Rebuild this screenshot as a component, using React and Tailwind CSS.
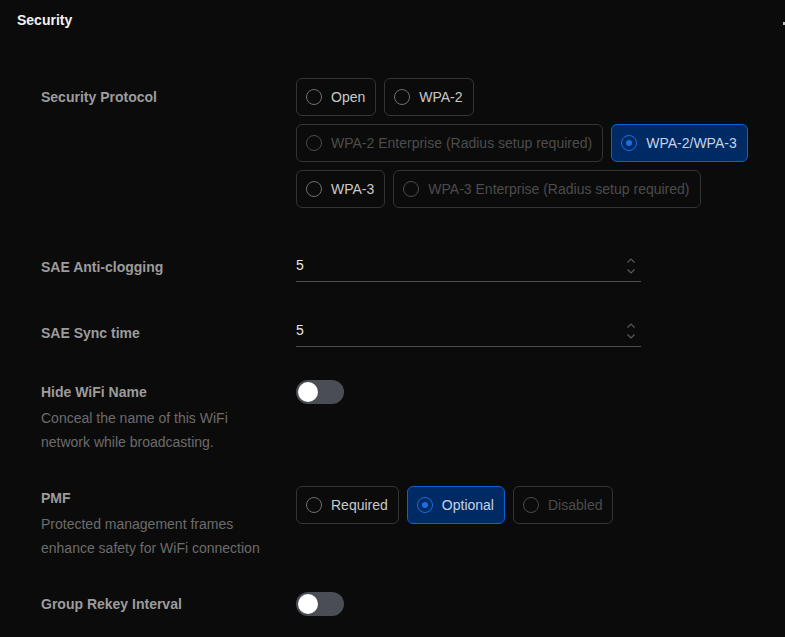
import { useState } from 'react'

const font = { fontFamily: '"Liberation Sans", Arial, sans-serif' }

function Radio({ label, checked, disabled, onClick }) {
  let box = 'border-[#333436] bg-transparent'
  let text = 'text-[#c9c9c9]'
  let ring = 'border-[#6f6f6f]'
  if (checked) {
    box = 'border-[#0b62d6] bg-[#002a63]'
    text = 'text-[#c6d3e6]'
    ring = 'border-[#1a6fe0]'
  } else if (disabled) {
    text = 'text-[#4c4c4c]'
    ring = 'border-[#4a4a4a]'
  }
  return (
    <button
      type="button"
      onClick={disabled ? undefined : onClick}
      className={`flex h-[38px] items-center gap-[9px] rounded-[6px] border pl-[9px] pr-[10px] text-[14px] ${box} ${text}`}
    >
      <span className={`flex h-4 w-4 items-center justify-center rounded-full border ${ring}`}>
        {checked && <span className="h-[6px] w-[6px] rounded-full bg-[#1a6fe0]" />}
      </span>
      {label}
    </button>
  )
}

function Toggle({ on, onClick }) {
  return (
    <button
      type="button"
      onClick={onClick}
      className={`flex h-6 w-12 items-center rounded-full px-[2px] ${on ? 'justify-end bg-[#0b62d6]' : 'bg-[#4b4d55]'}`}
    >
      <span className="h-5 w-5 rounded-full bg-white" />
    </button>
  )
}

function NumberInput({ value }) {
  return (
    <div className="flex h-8 w-[345px] items-center justify-between border-b border-[#4e4e4e] pr-[6px]">
      <span className="text-[14px] text-[#e6e6e6]">{value}</span>
      <span className="flex flex-col gap-[6px] text-[#5a5a5a]">
        <svg width="8" height="5" viewBox="0 0 8 5" fill="none" stroke="currentColor" strokeWidth="1.2">
          <path d="M0.5 4.5 L4 1 L7.5 4.5" />
        </svg>
        <svg width="8" height="5" viewBox="0 0 8 5" fill="none" stroke="currentColor" strokeWidth="1.2">
          <path d="M0.5 0.5 L4 4 L7.5 0.5" />
        </svg>
      </span>
    </div>
  )
}

function Label({ title, desc, className = '' }) {
  return (
    <div className={`w-[255px] shrink-0 ${className}`}>
      <div className="text-[14px] font-bold leading-6 text-[#9c9c9c]">{title}</div>
      {desc && <div className="mt-0.5 w-[232px] text-[14px] leading-6 text-[#6b6b6b]">{desc}</div>}
    </div>
  )
}

export default function App() {
  const [protocol, setProtocol] = useState('WPA-2/WPA-3')
  const [pmf, setPmf] = useState('Optional')
  const [hideName, setHideName] = useState(false)
  const [rekey, setRekey] = useState(false)

  const protoRows = [
    [{ label: 'Open' }, { label: 'WPA-2' }],
    [{ label: 'WPA-2 Enterprise (Radius setup required)', disabled: true }, { label: 'WPA-2/WPA-3' }],
    [{ label: 'WPA-3' }, { label: 'WPA-3 Enterprise (Radius setup required)', disabled: true }],
  ]

  return (
    <div className="relative min-h-[637px] overflow-hidden bg-[#0b0b0b]" style={font}>
      <div className="px-[17px] pt-[11px] text-[14px] font-bold leading-[18px] text-[#f2f2f2]">Security</div>
      <span className="absolute right-0 top-[22px] h-[3px] w-[2px] bg-[#bdbdbd]" />

      <div className="flex flex-col pl-[41px] pt-[49px]">
        {/* Security protocol */}
        <div className="flex">
          <Label title="Security Protocol" className="pt-[7px]" />
          <div className="flex flex-col gap-2">
            {protoRows.map((row, i) => (
              <div key={i} className="flex gap-2">
                {row.map((o) => (
                  <Radio
                    key={o.label}
                    label={o.label}
                    disabled={o.disabled}
                    checked={protocol === o.label}
                    onClick={() => setProtocol(o.label)}
                  />
                ))}
              </div>
            ))}
          </div>
        </div>

        <div className="mt-[42px] flex items-center">
          <Label title="SAE Anti-clogging" className="pt-px" />
          <NumberInput value="5" />
        </div>

        <div className="mt-[33px] flex items-center">
          <Label title="SAE Sync time" className="pt-[3px]" />
          <NumberInput value="5" />
        </div>

        <div className="mt-[33px] flex items-start">
          <Label title="Hide WiFi Name" desc="Conceal the name of this WiFi network while broadcasting." />
          <Toggle on={hideName} onClick={() => setHideName(!hideName)} />
        </div>

        <div className="mt-[32px] flex items-start">
          <Label title="PMF" desc="Protected management frames enhance safety for WiFi connection" />
          <div className="flex gap-2">
            {['Required', 'Optional', 'Disabled'].map((o) => (
              <Radio
                key={o}
                label={o}
                disabled={o === 'Disabled'}
                checked={pmf === o}
                onClick={() => setPmf(o)}
              />
            ))}
          </div>
        </div>

        <div className="mt-[32px] flex items-start">
          <Label title="Group Rekey Interval" />
          <Toggle on={rekey} onClick={() => setRekey(!rekey)} />
        </div>
      </div>
    </div>
  )
}
